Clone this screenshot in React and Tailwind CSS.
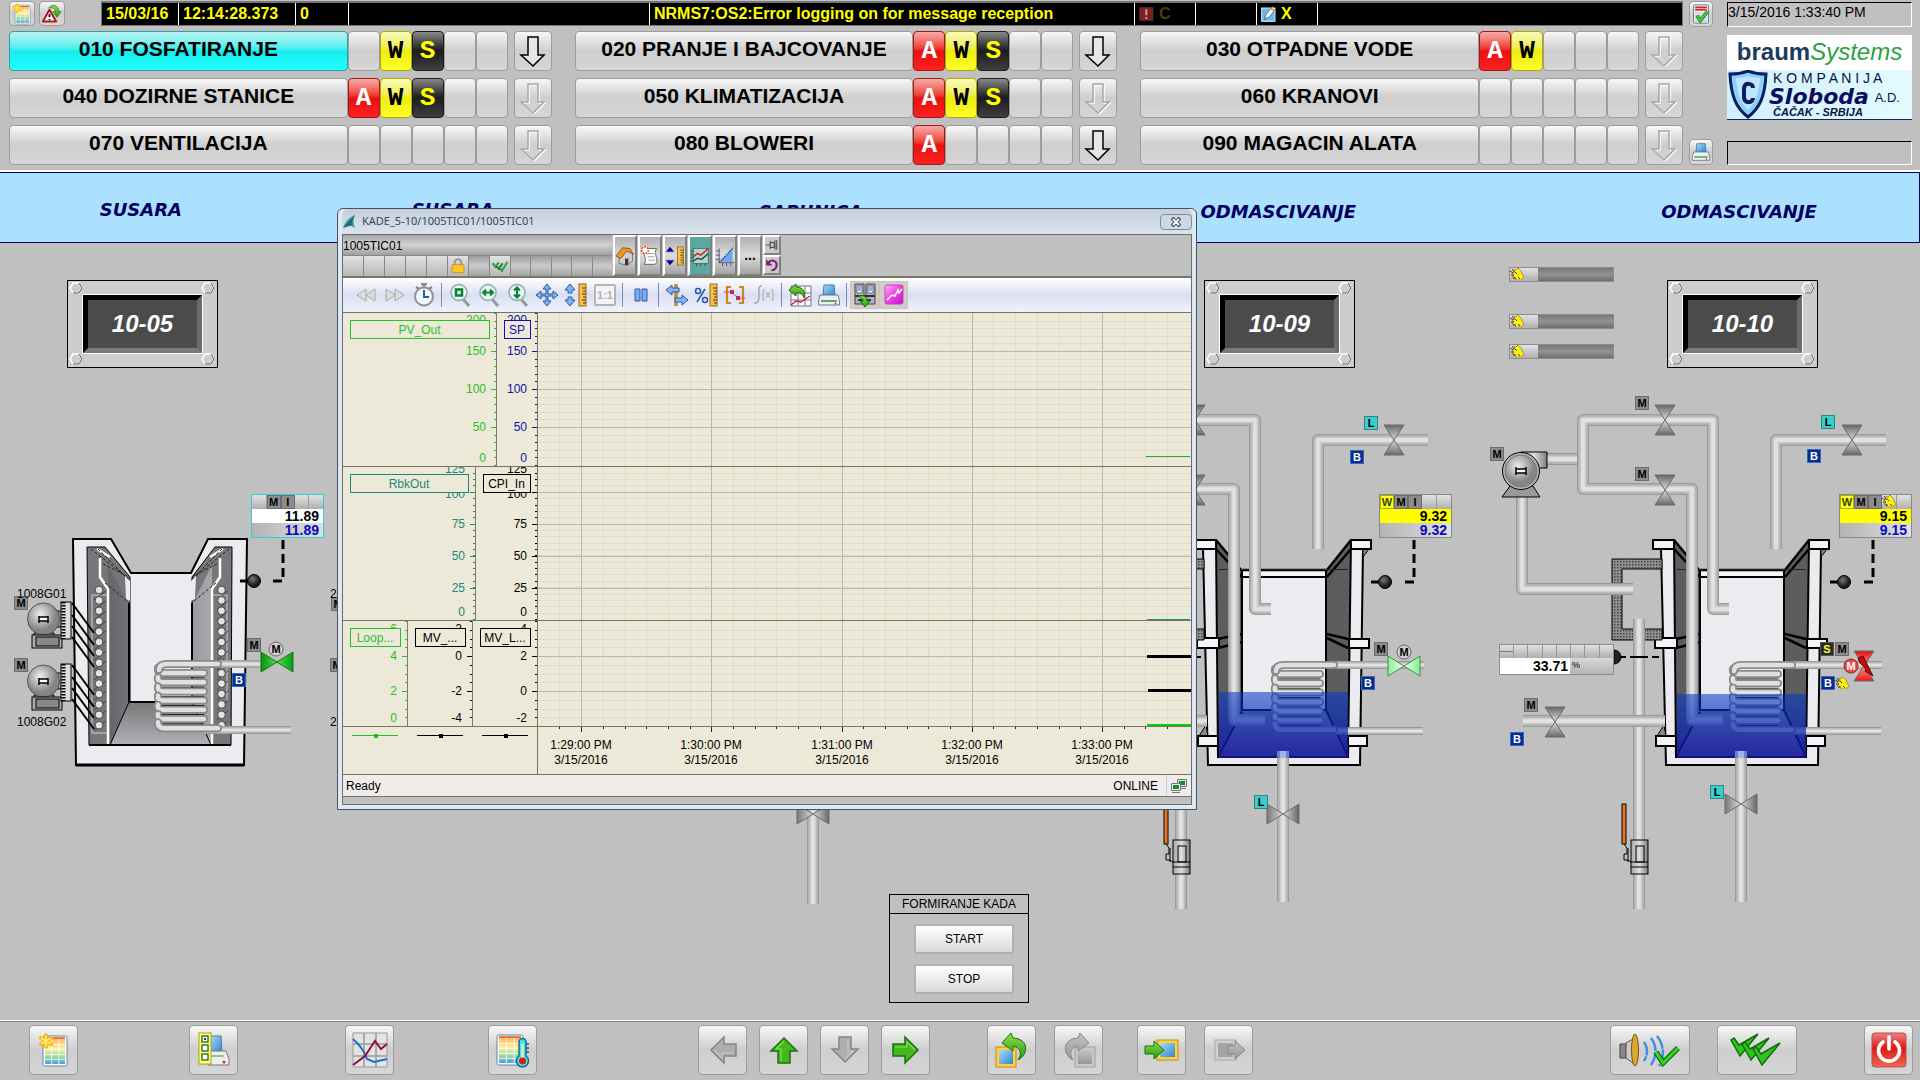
import React from "react";

/* ---------- icons ---------- */

const Star = ({ x = 5, y = 6, r = 5 }) => (
  <g transform={`translate(${x} ${y})`} stroke="#ffb400" strokeWidth={r * 0.62} strokeLinecap="round">
    <path d={`M0 ${-r}V${r}M${-r * 0.87} ${-r / 2}L${r * 0.87} ${r / 2}M${-r * 0.87} ${r / 2}L${r * 0.87} ${-r / 2}`} />
    <path d={`M0 ${-r * 0.8}V${r * 0.8}M${-r * 0.7} ${-r * 0.4}L${r * 0.7} ${r * 0.4}M${-r * 0.7} ${r * 0.4}L${r * 0.7} ${-r * 0.4}`} stroke="#fff07a" strokeWidth={r * 0.28} />
  </g>
);

const Sheet = ({ x, y, w, h }) => (
  <g>
    <rect x={x} y={y} width={w} height={h} rx="1.5" fill="#fff" stroke="#5f86a8" />
    <rect x={x + 2} y={y + 2} width={w - 4} height={h - 4} fill="url(#sheetFill)" />
    <path
      d={`M${x + 2} ${y + h * 0.28}h${w - 4}M${x + 2} ${y + h * 0.45}h${w - 4}M${x + 2} ${y + h * 0.62}h${w - 4}M${x + 2} ${y + h * 0.78}h${w - 4}M${x + w * 0.36} ${y + 2}v${h - 4}M${x + w * 0.66} ${y + 2}v${h - 4}`}
      stroke="#fff"
      strokeWidth=".8"
    />
    <path d={`M${x + 2} ${y + 2}h${w - 4}`} stroke="#e84a1c" strokeWidth="1.4" />
  </g>
);

const Defs = () => (
  <svg className="absolute h-0 w-0" aria-hidden="true">
    <defs>
      <linearGradient id="sheetFill" x1="0" y1="0" x2="0" y2="1">
        <stop offset="0" stopColor="#ffb45a" />
        <stop offset=".4" stopColor="#ffef9a" />
        <stop offset=".7" stopColor="#9fdc9a" />
        <stop offset="1" stopColor="#4f9fe0" />
      </linearGradient>
      <linearGradient id="green" x1="0" y1="0" x2="0" y2="1">
        <stop offset="0" stopColor="#8ee04c" />
        <stop offset="1" stopColor="#1f9a0c" />
      </linearGradient>
      <linearGradient id="greyArrow" x1="0" y1="0" x2="0" y2="1">
        <stop offset="0" stopColor="#c4c4c4" />
        <stop offset="1" stopColor="#969696" />
      </linearGradient>
      <linearGradient id="blue" x1="0" y1="0" x2="1" y2="1">
        <stop offset="0" stopColor="#a8dcf8" />
        <stop offset="1" stopColor="#2f86d0" />
      </linearGradient>
      <linearGradient id="red" x1="0" y1="0" x2="0" y2="1">
        <stop offset="0" stopColor="#f08080" />
        <stop offset=".45" stopColor="#dd1818" />
        <stop offset="1" stopColor="#f06a50" />
      </linearGradient>
      <linearGradient id="pink" x1="0" y1="0" x2="1" y2="1">
        <stop offset="0" stopColor="#ffb0ff" />
        <stop offset=".5" stopColor="#f040e8" />
        <stop offset="1" stopColor="#c010c0" />
      </linearGradient>
    </defs>
  </svg>
);

const Svg = ({ s = "h-6 w-6", vb = "0 0 24 24", children }) => (
  <svg className={`${s} shrink-0`} viewBox={vb} fill="none" aria-hidden="true">
    {children}
  </svg>
);

const ListStarIcon = ({ s }) => (
  <Svg s={s} vb="0 0 32 36">
    <Sheet x={5} y={4} w={24} h={30} />
    <Star x={8} y={9} r={6} />
  </Svg>
);
const AlarmArrowIcon = () => (
  <Svg s="h-5 w-5">
    <path d="M9 7L1 21h16z" fill="#fff" stroke="#b01818" strokeWidth="2.4" strokeLinejoin="round" />
    <path d="M9 12v4M9 18v1.5" stroke="#111" strokeWidth="2.2" />
    <path d="M8 5C12-1 20 1 20 9h3l-5 7-5-7h3c0-4-4-5-8-4z" fill="url(#green)" stroke="#1c7a10" strokeWidth=".8" />
  </Svg>
);
const ReportCheckIcon = () => (
  <Svg s="h-5 w-5">
    <rect x="3" y="1" width="18" height="22" rx="1" fill="#e6edf5" stroke="#51708f" />
    <rect x="5" y="3" width="14" height="5" fill="#e02020" />
    <path d="M5 5.5h14" stroke="#fff" strokeWidth=".8" />
    <path d="M5 11h14M5 14h14M5 17h14M5 20h14" stroke="#a8bdd0" />
    <path d="M7 14l4 6 9-11" stroke="#0f6d0a" strokeWidth="4" />
    <path d="M7 14l4 6 9-11" stroke="#4cd63c" strokeWidth="2.2" />
  </Svg>
);
const PrinterIcon = ({ s = "h-5 w-5" }) => (
  <Svg s={s}>
    <path d="M7 2h10l1 10H6z" fill="url(#blue)" stroke="#3c7ba8" />
    <path d="M3 12h18l1.5 6v4h-21v-4z" fill="#eef1f3" stroke="#6c7a86" />
    <path d="M4 18h16" stroke="#2c9a3c" strokeWidth="1.6" />
    <circle cx="18.5" cy="20.5" r="1" fill="#e33" />
  </Svg>
);
const NoteIcon = () => (
  <Svg s="h-4 w-4">
    <rect x="1" y="3" width="20" height="20" fill="#5fc0f0" stroke="#d8f0ff" strokeWidth="1.5" />
    <path d="M5 20l3-8L17 1l5 3-9 12z" fill="#fff" stroke="#333" />
    <path d="M15 4l5 3" stroke="#e9a23a" strokeWidth="3" />
  </Svg>
);
const AlertSquare = () => (
  <Svg s="h-4 w-4">
    <rect x="1" y="2" width="20" height="20" fill="#7c2222" stroke="#4d3030" />
    <path d="M11 5v9M11 16.5v3" stroke="#c9a0a0" strokeWidth="3" />
  </Svg>
);
const DownArrow = ({ on }) => (
  <Svg s="h-8 w-8" vb="0 0 32 32">
    {!on && <path d="M12 3h10v18h6L17 32 5 21h7z" stroke="#fff" strokeWidth="1.5" />}
    <path d="M11 2h10v18h6L16 31 4 20h7z" fill={on ? "#e6e6e6" : "none"} stroke={on ? "#000" : "#a6a6a6"} strokeWidth="1.5" />
  </Svg>
);
const BlockArrow = ({ dir, on }) => {
  const r = { left: 180, up: -90, down: 90, right: 0 }[dir];
  return (
    <Svg s="h-8 w-8" vb="0 0 32 32">
      <path
        transform={`rotate(${r} 16 16)`}
        d="M3 10h12V3l13 13-13 13v-7H3z"
        fill={on ? "#43b81e" : "#aeaeae"}
        stroke={on ? "#1c7010" : "#858585"}
        strokeWidth="1.5"
      />
      <path transform={`rotate(${r} 16 16)`} d="M5 13h12V8l8 8" stroke={on ? "#93e860" : "#cfcfcf"} strokeWidth="1.2" opacity=".8" />
    </Svg>
  );
};
const ReportPrintIcon = () => (
  <Svg s="h-9 w-9" vb="0 0 36 36">
    <path d="M14 4h11l1 16H14z" fill="url(#blue)" stroke="#5b7d99" />
    <path d="M12 19h18l3 8v6H12z" fill="#eee" stroke="#777" />
    <path d="M13 24h15" stroke="#38a038" />
    <circle cx="28" cy="30" r="1.5" fill="#e22" />
    <rect x="3" y="1" width="12" height="31" fill="#ffff8c" stroke="#a8a800" />
    <path d="M6 4h6v6H6zM6 13h6v6H6zM6 22h6v6H6z" fill="#fff" stroke="#3c7a20" strokeWidth="1.5" />
    <path d="M8 6h2v2H8z" fill="#1c3a80" />
  </Svg>
);
const TrendIcon = () => (
  <Svg s="h-9 w-9" vb="0 0 36 36">
    <path d="M1 1h34v34H1z" fill="#e3e3e3" stroke="#999" />
    <path d="M1 12h34M1 24h34M12 1v34M24 1v34" stroke="#999" strokeWidth="1.5" />
    <path d="M1 7c7 6 12 14 14 20l7 3 13-3" stroke="#1a6fc8" strokeWidth="2" />
    <path d="M1 33l12-9 10-15 6 8 6-5" stroke="#8c1040" strokeWidth="2" />
  </Svg>
);
const TableThermoIcon = () => (
  <Svg s="h-9 w-9" vb="0 0 36 36">
    <Sheet x={2} y={3} w={26} h={30} />
    <path d="M24 10a3.5 3.5 0 017 0v14a6 6 0 11-7 0z" fill="#4fe0f0" stroke="#0c6f90" strokeWidth="1.5" />
    <path d="M27.5 12v16" stroke="#fff5a0" strokeWidth="2" />
    <circle cx="27.5" cy="29" r="3.5" fill="#e01818" />
    <path d="M31 12h3M31 16h3M31 20h3" stroke="#0c5f90" strokeWidth="1.5" />
  </Svg>
);
const PageCurveIcon = ({ on, flip }) => (
  <Svg s="h-9 w-9" vb="0 0 36 36">
    <g transform={flip ? "translate(36 0) scale(-1 1)" : undefined}>
      <rect x="2" y="15" width="20" height="20" fill={on ? "#ffd23c" : "#c8c8c8"} stroke={on ? "#c88a10" : "#a0a0a0"} />
      <rect x="5" y="18" width="14" height="14" fill={on ? "url(#blue)" : "url(#greyArrow)"} />
      <path d="M17 1L8 11l11 8v-5c8 1 9 8 5 14 10-5 12-21-5-22z" fill={on ? "url(#green)" : "url(#greyArrow)"} stroke={on ? "#1c7010" : "#888"} />
    </g>
  </Svg>
);
const GotoIcon = ({ on }) => (
  <Svg s="h-9 w-9" vb="0 0 36 36">
    <rect x={on ? 13 : 4} y="8" width="21" height="20" fill={on ? "#ffd23c" : "#d0d0d0"} stroke={on ? "#c88a10" : "#a8a8a8"} />
    <rect x={on ? 16 : 7} y="11" width="15" height="14" fill={on ? "url(#blue)" : "#a4a4a4"} />
    {on ? (
      <path d="M1 14h9V9l10 9-10 9v-5H1z" fill="url(#green)" stroke="#1c7010" />
    ) : (
      <path d="M17 14h7V9l10 9-10 9v-5h-7z" fill="url(#greyArrow)" stroke="#888" />
    )}
  </Svg>
);
const HornIcon = () => (
  <Svg s="h-9 w-16" vb="0 0 64 36">
    <path d="M2 12h6v14H2z" fill="#888" stroke="#444" />
    <path d="M8 11l7-4v24l-7-5z" fill="#ccc" stroke="#555" />
    <ellipse cx="17" cy="18" rx="3.5" ry="16" fill="#d8a830" stroke="#7a5210" />
    <path d="M26 10c4 6 4 12 0 19M33 6c6 8 6 18 0 27M39 4c7 9 8 20 2 30" stroke="#3f8fe0" strokeWidth="2.5" strokeDasharray="14 1" />
    <path d="M38 20l7 11 15-15" stroke="#0f6d0a" strokeWidth="5.5" />
    <path d="M38 20l7 11 15-15" stroke="#35d428" strokeWidth="3" />
  </Svg>
);
const TripleCheckIcon = () => (
  <Svg s="h-9 w-14" vb="0 0 56 36">
    {[
      [0, 0],
      [11, 4],
      [22, 9],
    ].map(([x, y]) => (
      <path key={x} transform={`translate(${x} ${y})`} d="M2 8l3-2 5 7L29 2 11 24z" fill="#2fc41e" stroke="#0f6d0a" strokeWidth="1.5" />
    ))}
  </Svg>
);
const PowerIcon = () => (
  <Svg s="h-9 w-9" vb="0 0 36 36">
    <rect x="1" y="1" width="34" height="34" rx="3" fill="url(#red)" stroke="#b85050" />
    <path d="M12 10a10.5 10.5 0 1012 0" stroke="#fff" strokeWidth="3.6" strokeLinecap="round" />
    <path d="M18 5v12" stroke="#fff" strokeWidth="3.6" strokeLinecap="round" />
  </Svg>
);
const HandGlyph = () => (
  <Svg s="h-3 w-3.5" vb="0 0 14 12">
    <path d="M4 1l2 1 2-2 3 3 1 3 2 3-3 3H6L4 9H2l2-2-2-2 3-1z" fill="#ffee10" stroke="#6a6a20" strokeWidth=".6" />
    <path d="M2 1l2 3M0 3l3 2M1 7h3M3 10h3M5 4l2 2M8 9l2 2" stroke="#3c3c30" />
  </Svg>
);

/* ---------- header ---------- */

const raised = "border border-[#9c9c9c] rounded-sm bg-gradient-to-b from-[#f7f7f7] via-[#cecece] to-[#d6d6d6]";

const AREAS = [
  ["010 FOSFATIRANJE", " WS  ", true],
  ["020 PRANJE I BAJCOVANJE", "AWS  ", true],
  ["030 OTPADNE VODE", "AW   ", false],
  ["040 DOZIRNE STANICE", "AWS  ", false],
  ["050 KLIMATIZACIJA", "AWS  ", false],
  ["060 KRANOVI", "     ", false],
  ["070 VENTILACIJA", "     ", false],
  ["080 BLOWERI", "A    ", true],
  ["090 MAGACIN ALATA", "     ", false],
];

const CELL = {
  A: "border-[#a01818] bg-gradient-to-b from-[#f6a8a8] via-[#e81010] to-[#ff2020] text-white",
  W: "border-[#b0a800] bg-gradient-to-b from-[#fbfbb8] via-[#ecec10] to-[#ffff28] text-black",
  S: "border-[#1c1c1c] bg-gradient-to-b from-[#8a8a8a] via-[#1c1c1c] to-[#404040] text-[#ffff00]",
};

function Area({ name, cells, arrow, active }) {
  return (
    <div className="flex h-10">
      <button
        className={`min-w-0 flex-1 rounded-sm border pb-1 text-[21px] font-bold whitespace-nowrap text-black ${
          active
            ? "border-[#2fa0a4] bg-gradient-to-b from-[#b8f4f4] via-[#14ecec] to-[#20ffff]"
            : "border-[#9c9c9c] bg-gradient-to-b from-[#f7f7f7] via-[#cecece] to-[#d6d6d6]"
        }`}
      >
        {name}
      </button>
      {cells.split("").map((c, i) =>
        c === " " ? (
          <span key={i} className={`w-8 ${raised}`} />
        ) : (
          <button key={i} className={`w-8 rounded-sm border text-center font-['Liberation_Mono',monospace] text-[26px] leading-9 font-bold ${CELL[c]}`}>
            {c}
          </button>
        )
      )}
      <button aria-label={`${name} next alarm`} className={`ml-1.5 flex w-[38px] items-center justify-center ${raised}`}>
        <DownArrow on={arrow} />
      </button>
    </div>
  );
}

const smallBtn = `flex items-center justify-center ${raised}`;

function Header() {
  return (
    <header className="flex border-b-2 border-white pt-px pr-2 pb-[5px] pl-[9px]">
      <div className="min-w-0 flex-1">
        <div className="flex h-[25px]">
          <button aria-label="Alarm list" className={`w-[26px] ${smallBtn}`}><ListStarIcon s="h-6 w-5" /></button>
          <button aria-label="Next alarm" className={`ml-1 w-[26px] ${smallBtn}`}><AlarmArrowIcon /></button>
          <div className="ml-9 flex min-w-0 flex-1 divide-x divide-white border border-t-2 border-[#777] bg-black text-[16px] leading-[22px] font-bold whitespace-nowrap text-[#ffff00]">
            <span className="w-[77px] pl-1">15/03/16</span>
            <span className="w-[117px] pl-1">12:14:28.373</span>
            <span className="w-[53px] pl-1">0</span>
            <span className="w-[301px]" />
            <span className="w-[485px] pl-1">NRMS7:OS2:Error logging on for message reception</span>
            <span className="flex w-[61px] items-center gap-1 pl-1 text-[#404008]"><AlertSquare />C</span>
            <span className="w-[61px]" />
            <span className="flex w-[61px] items-center gap-1 pl-1"><NoteIcon />X</span>
            <span className="flex-1" />
          </div>
        </div>
        <div className="mt-[5px] grid grid-cols-3 gap-x-[23px] gap-y-[7px]">
          {AREAS.map(([name, cells, arrow], i) => (
            <Area key={name} name={name} cells={cells} arrow={arrow} active={i === 0} />
          ))}
        </div>
      </div>
      <div className="ml-1.5 flex flex-col justify-between">
        <button aria-label="Acknowledge report" className={`h-[26px] w-6 ${smallBtn}`}><ReportCheckIcon /></button>
        <button aria-label="Print" className={`h-[26px] w-6 ${smallBtn}`}><PrinterIcon /></button>
      </div>
      <div className="ml-[14px] flex w-[185px] flex-col">
        <time className="mt-px h-[25px] border border-t-black border-r-white border-b-white border-l-black text-[14px] leading-[18px]">3/15/2016 1:33:40 PM</time>
        <div className="mt-2 h-[35px] bg-white text-center text-[24px] leading-[34px] whitespace-nowrap">
          <span className="font-bold text-[#1b3a5c]">braum</span>
          <span className="text-[#2f9e44] italic">Systems</span>
        </div>
        <div className="flex h-[50px] border-b border-[#0a2a5a] bg-gradient-to-r from-[#d0efff] to-[#e4fbff] text-[#0a1240]">
          <svg className="h-[50px] w-[42px] shrink-0" viewBox="0 0 42 50" fill="none" aria-hidden="true">
            <path d="M3 4c7 0 13-1 18-3 5 2 11 3 18 3-1 22-6 34-18 43C9 38 4 26 3 4z" fill="#8fd0f8" stroke="#0d1e60" strokeWidth="3" />
            <path d="M9 8c5 0 9-1 12-2 3 1 7 2 12 2-1 14-4 24-12 32C13 32 10 22 9 8z" fill="#bfe6ff" />
            <path d="M26 18c0-5-8-6-9 0v10c1 6 9 5 9 0" stroke="#0d1e60" strokeWidth="4" />
          </svg>
          <div className="min-w-0 flex-1 whitespace-nowrap">
            <div className="pl-1 text-[14px] leading-[17px]">K O M P A N I J A</div>
            <div className="flex items-end justify-between pr-3">
              <span className="font-['DejaVu_Sans',sans-serif] text-[22px] leading-[19px] font-bold text-[#0d0d60] italic">Sloboda</span>
              <span className="text-[13px] leading-4">A.D.</span>
            </div>
            <div className="pl-1 text-[11px] leading-[13px] font-bold italic">ČAČAK - SRBIJA</div>
          </div>
        </div>
        <div className="mt-auto h-6 border border-t-black border-r-white border-b-white border-l-black" />
      </div>
    </header>
  );
}

/* ---------- plant drawing primitives ---------- */

const Pipe = ({ d, w = 12 }) => (
  <g fill="none" strokeLinejoin="round">
    <path d={d} stroke="#9a9a9a" strokeWidth={w} />
    <path d={d} stroke="#b2b2b2" strokeWidth={w - 2} />
    <path d={d} stroke="#cccccc" strokeWidth={w * 0.55} />
    <path d={d} stroke="#e2e2e2" strokeWidth={w * 0.28} />
  </g>
);

const ValveV = ({ x, y, fill = "url(#valveV)" }) => (
  <path d={`M${x - 10} ${y - 15}h20L${x - 10} ${y + 15}h20z`} fill={fill} stroke="#6a6a6a" strokeWidth="1" />
);
const ValveH = ({ x, y, fill = "url(#valveH)", stroke = "#6a6a6a" }) => (
  <path d={`M${x - 16} ${y - 10}v20L${x + 16} ${y - 10}v20z`} fill={fill} stroke={stroke} strokeWidth="1" />
);
const MotorDisc = ({ x, y, red }) => (
  <g>
    <circle cx={x} cy={y} r="7" fill={red ? "#e84848" : "#d0d0d0"} stroke={red ? "#a02020" : "#666"} />
    <text x={x} y={y + 4} textAnchor="middle" fontSize="11" fontWeight="bold" fill={red ? "#fff" : "#000"}>M</text>
  </g>
);
const Coil = ({ x1, x2, y, n, gap }) => {
  const turns = Array.from({ length: n }, (_, i) => y + 9 + i * gap);
  const last = y + 9 + n * gap;
  return (
    <g fill="none" strokeLinecap="round">
      {turns.map((t) => (
        <g key={t}>
          <path d={`M${x1 + 6} ${t}H${x2 - 4}`} stroke="#000" strokeWidth="1" transform="translate(0 5)" />
          <path d={`M${x1 + 3} ${t - 5}q-1 5 5 5H${x2 - 4}`} stroke="#8a8a8a" strokeWidth="8" />
          <path d={`M${x1 + 3} ${t - 5}q-1 5 5 5H${x2 - 4}`} stroke="#e0e0e0" strokeWidth="4.5" />
        </g>
      ))}
      <path d={`M${x1 + 3} ${last - 6}q0 6 6 6H${x2 + 10}`} stroke="#8a8a8a" strokeWidth="8" />
      <path d={`M${x1 + 3} ${last - 6}q0 6 6 6H${x2 + 10}`} stroke="#e0e0e0" strokeWidth="4.5" />
      <path d={`M${x2 + 10} ${y}H${x1 + 12}q-8 0-8 6`} stroke="#8a8a8a" strokeWidth="8" />
      <path d={`M${x2 + 10} ${y}H${x1 + 12}q-8 0-8 6`} stroke="#e0e0e0" strokeWidth="4.5" />
    </g>
  );
};
const Probe = ({ x, y, dx, top }) => (
  <g stroke="#000">
    <path d={`M${x - 14} ${y}h10`} strokeWidth="3" />
    <circle cx={x} cy={y} r="6.5" fill="url(#ball)" />
    <path d={`M${x + dx} ${top}V${y}h-12`} fill="none" strokeWidth="3" strokeDasharray="9 5" />
  </g>
);
const BallValve = ({ x }) => (
  <g stroke="#000">
    <rect x={x - 17} y="804" width="4" height="40" fill="#e8742c" />
    <path d={`M${x - 15} 844l3 4v6h-3v6h4l5 4M${x - 11} 848v14`} fill="none" />
    <rect x={x - 8} y="840" width="17" height="34" fill="url(#metal)" />
    <rect x={x - 3} y="846" width="8" height="16" fill="none" />
    <path d={`M${x - 8} 862h17M${x - 8} 867h17`} />
  </g>
);

/* Degreasing bath with its inlet, drain, overflow and heating coil. */
function Bath({ dx, waterY, feedValveX, drainY, children }) {
  return (
    <g transform={`translate(${dx} 0)`}>
      <path d="M1655 559h8v7h-8z" fill="#777" />
      <path d="M1661 548L1666 765H1818L1821 548z" fill="#ebebf0" stroke="#000" strokeWidth="2" />
      <path d="M1664 725l-7 11h9zM1821 549h6l-6 8z" fill="#888" stroke="#000" />
      <path d="M1674 540L1699 570H1785L1809 540 1806 757H1676z" fill="#5d5d60" />
      <path d="M1674 539L1699 569H1785L1809 539z" fill="#c0c0c0" />
      <path d="M1699 571h86v6h-86z" fill="#f4f4f8" />
      <rect x="1700" y="577" width="84" height="133" fill="#ebebf0" stroke="#000" strokeWidth="2" />
      <path d="M1700 711h84l22 46H1676z" fill="#8c8c90" />
      <path d="M1674 540L1699 570H1785L1809 540M1674 549L1700 577M1785 577L1809 549M1676 639l24-5M1676 648l24-6M1785 634l21 5M1785 638l21 10" fill="none" stroke="#000" strokeWidth="2.5" />
      <path d="M1674 540L1676 757H1806L1809 540M1676 757L1700 712M1784 710L1806 757M1700 570v140M1784 570v140" fill="none" stroke="#000" strokeWidth="2" />
      <path d="M1677 569.5H1806" stroke="#222" />
      <g fill="#f4f4f8" stroke="#000" strokeWidth="2">
        <path d="M1653 540h21v9h-21zM1809 540h20v9h-20zM1655 638h22v10h-22zM1807 639h20v9h-20zM1656 736h20v10h-20zM1806 736h19v10h-19z" />
      </g>
      <path d="M1612 559h50v10h-40v60h40v11h-50z" fill="url(#hatch)" stroke="#000" />
      <path d="M1619 657H1662" stroke="#000" strokeWidth="2" strokeDasharray="7 4" />
      <Pipe d="M1639 619V909" />
      <Pipe d="M1523 721H1665" />
      <Pipe d="M1522 497V589H1633" />
      <Pipe d="M1546 459H1583" />
      <Pipe d="M1583 459V489H1692V720H1723" />
      <Pipe d="M1583 459V420H1713V609H1729" />
      <Pipe d="M1886 440H1776V549" />
      <Pipe d="M1792 665H1882" w={8} />
      <Pipe d="M1792 731H1881" w={8} />
      <Coil x1={1730} x2={1782} y={665} n={6} gap={9.3} />
      <rect x="1677" y={waterY} width="129" height={758 - waterY} fill="url(#water)" />
      <Pipe d="M1741 757V902" />
      <path d="M1735 751h12v7h-12z" fill="#6f7fd0" />
      <path d="M1738 751h6v7h-6z" fill="#a9b4e6" />
      <ValveV x={feedValveX} y={420} />
      <ValveV x={feedValveX} y={490} />
      <ValveV x={1852} y={440} />
      <ValveH x={1741} y={drainY} />
      <BallValve x={1639} />
      {children}
    </g>
  );
}

const Fan = ({ y }) => (
  <g stroke="#000">
    <path d={`M50 ${y - 8}h12v16H50M34 ${y + 14}h20v5H34z`} fill="#999" />
    <circle cx="43.5" cy={y} r="16" fill="url(#disc)" stroke="#555" />
    <path d={`M39 ${y - 3}v7M48 ${y - 3}v7M39 ${y - 2}h9v4h-9`} fill="#fff" strokeWidth="1.5" />
    <rect x="32" y={y + 16} width="30" height="13" fill="#aaa" />
    <rect x="36" y={y + 18} width="23" height="9" fill="#888" />
    <rect x="61" y={y - 17} width="10" height="37" fill="#ddd" />
    <path d={`M63.5 ${y - 17}v37`} strokeWidth="4" strokeDasharray="1.5 1.5" />
    {[0, 12, 23, 34].map((k) => (
      <path key={k} d={`M72 ${y - 16 + k}l22 30`} strokeWidth="2" />
    ))}
  </g>
);

const Oven = () => (
  <g>
    <path d="M73 539H111L131 573H191L208 539H247L244 765H76z" fill="#ebebf0" stroke="#000" strokeWidth="2" />
    <path d="M87 547h18l25 30v125L110 745H89zM232 547h-17l-23 30v125l19 43h20z" fill="#77777a" stroke="#000" />
    <path d="M108 565l21 38v99l-19 43zM212 565l-19 38v99l18 43z" fill="url(#side)" />
    <path d="M129 702h63l19 43H110z" fill="url(#floor)" stroke="#000" />
    <path d="M129 603V702M192 603V702M129 702H192M89 745H231" stroke="#000" strokeWidth="2" fill="none" />
    <path d="M76 765H244" stroke="#000" strokeWidth="3" />
    <path d="M100 558v19l8 12V744M220 558v19l-8 12V744M97 549l13 8M223 549l-13 8" stroke="#fff" strokeWidth="2.5" fill="none" />
    <path d="M91 549l38 30M98 549l32 32M103 564l24 12M229 549l-37 30M222 549l-32 32M217 564l-24 12M105 583l22 18M216 583l-22 18" stroke="#222" strokeDasharray="3 2" fill="none" />
    <path d="M125 576l5 5v20l-4-2zM196 576l-5 5v20l4-2z" fill="#ebebf0" />
    <path d="M107 595H92V733h15M213 595h14V700" stroke="#ccc" fill="none" />
    {Array.from({ length: 14 }, (_, i) => (
      <g key={i} fill="#e4e4e8" stroke="#333" strokeWidth=".8">
        <path d={`M94 ${600 + i * 10}l12-9M217 ${600 + i * 10}l11-9`} />
        <circle cx="99" cy={590 + i * 10.4} r="3.8" />
        <circle cx="221.5" cy={590 + i * 10.4} r="3.8" />
      </g>
    ))}
    <Fan y={619} />
    <Fan y={681} />
    <Pipe d="M204 664H262" w={8} />
    <Pipe d="M204 730H291" w={8} />
    <Coil x1={155} x2={208} y={664} n={6} gap={9.2} />
    <ValveH x={277} y={662} fill="url(#valveGreen)" stroke="#0c7a0c" />
    <MotorDisc x={276} y={649} />
    <Probe x={254} y={581} dx={29} top={540} />
  </g>
);

const PlantDrawing = () => (
  <svg className="absolute top-0 left-0 h-[777px] w-[1920px] font-['Liberation_Sans',sans-serif]" viewBox="0 243 1920 777" aria-hidden="true">
    <defs>
      <linearGradient id="valveV" x1="0" y1="0" x2="0" y2="1">
        <stop offset="0" stopColor="#686868" /><stop offset=".5" stopColor="#dcdcdc" /><stop offset="1" stopColor="#686868" />
      </linearGradient>
      <linearGradient id="valveH" x1="0" y1="0" x2="1" y2="0">
        <stop offset="0" stopColor="#787878" /><stop offset=".5" stopColor="#dcdcdc" /><stop offset="1" stopColor="#686868" />
      </linearGradient>
      <linearGradient id="valveGreen" x1="0" y1="0" x2="1" y2="0">
        <stop offset="0" stopColor="#0c8c14" /><stop offset=".5" stopColor="#4fe04f" /><stop offset="1" stopColor="#0a9a18" />
      </linearGradient>
      <linearGradient id="valveLight" x1="0" y1="0" x2="1" y2="0">
        <stop offset="0" stopColor="#90f09c" /><stop offset=".5" stopColor="#e8ffe8" /><stop offset="1" stopColor="#80ee90" />
      </linearGradient>
      <linearGradient id="valveRed" x1="0" y1="0" x2="0" y2="1">
        <stop offset="0" stopColor="#e81010" /><stop offset=".5" stopColor="#ff9090" /><stop offset="1" stopColor="#f01818" />
      </linearGradient>
      <linearGradient id="metal"><stop offset="0" stopColor="#a8a8a8" /><stop offset=".5" stopColor="#dedede" /><stop offset="1" stopColor="#7c7c7c" /></linearGradient>
      <linearGradient id="side"><stop offset="0" stopColor="#66666a" /><stop offset="1" stopColor="#a8a8ac" /></linearGradient>
      <linearGradient id="floor" x1="0" y1="0" x2="0" y2="1"><stop offset="0" stopColor="#77777a" /><stop offset="1" stopColor="#b2b2b6" /></linearGradient>
      <linearGradient id="water" x1="0" y1="0" x2="0" y2="1">
        <stop offset="0" stopColor="#0038c8" stopOpacity=".55" /><stop offset="1" stopColor="#1414a0" stopOpacity=".85" />
      </linearGradient>
      <radialGradient id="disc" cx=".4" cy=".35"><stop offset="0" stopColor="#eee" /><stop offset="1" stopColor="#848484" /></radialGradient>
      <radialGradient id="ball" cx=".4" cy=".35"><stop offset="0" stopColor="#777" /><stop offset="1" stopColor="#1c1c1c" /></radialGradient>
      <pattern id="hatch" width="3" height="3" patternUnits="userSpaceOnUse"><rect width="3" height="3" fill="#909090" /><rect width="1.5" height="1.5" fill="#444" /></pattern>
    </defs>

    <Oven />

    <Pipe d="M813 760V904" />
    <ValveH x={813} y={814} />

    <Bath dx={-458} waterY={692} feedValveX={1653} drainY={814}>
      <ValveH x={1862} y={666} fill="url(#valveLight)" stroke="#4a8a54" />
      <MotorDisc x={1862} y={652} />
      <Probe x={1843} y={582} dx={29} top={540} />
    </Bath>

    <Bath dx={0} waterY={694} feedValveX={1665} drainY={804}>
      <path d="M1510 486h23l7 11h-38z" fill="#999" stroke="#000" />
      <path d="M1521 452h26v16h-16z" fill="url(#metal)" stroke="#000" />
      <circle cx="1521" cy="471" r="18.5" fill="#b4b4b4" stroke="#000" />
      <circle cx="1521" cy="471" r="16" fill="url(#disc)" stroke="#777" />
      <path d="M1516 467v8M1526 467v8M1516 469h10v4h-10" fill="#fff" stroke="#000" strokeWidth="1.5" />
      <ValveV x={1555} y={722} />
      <path d="M1614 650a7 7 0 010 14z" fill="#222" stroke="#000" />
      <path d="M1633 657h12" stroke="#000" strokeWidth="2" />
      <ValveV x={1864} y={666} fill="url(#valveRed)" />
      <path d="M1858 658l5-2 3 6 2 4 1 2 4 8-8-5 1-2-6-6z" fill="#d00808" stroke="#200" strokeWidth=".8" />
      <MotorDisc x={1851} y={666} red />
      <Probe x={1844} y={582} dx={29} top={540} />
    </Bath>
  </svg>
);

/* ---------- plant nodes placed on the canvas ---------- */

const CANVAS_TOP = 243;
const At = ({ x, y, children }) => (
  <div className="absolute" style={{ left: x, top: y - CANVAS_TOP }}>
    {children}
  </div>
);

const TAG = {
  M: "border-[#6c6c6c] bg-[#8c8c8c] text-black",
  L: "border-[#3a8080] bg-[#38d0cc] text-black",
  B: "border-[#3468b8] bg-[#082c90] text-white",
  S: "border-[#555] bg-[#2a2a2a] text-[#ffff30]",
  W: "border-[#b0b000] bg-[#ffff20] text-[#404000]",
  I: "border-[#6c6c6c] bg-[#8c8c8c] text-black",
};
const Tag = ({ k }) => <span className={`block h-3.5 w-3.5 border text-center text-[11px] leading-3 font-bold ${TAG[k]}`}>{k}</span>;

const TAGS = [
  ["M", 14, 596], ["M", 14, 658], ["M", 247, 638], ["B", 232, 673], ["M", 331, 597], ["M", 330, 658],
  ["L", 1364, 416], ["B", 1350, 450], ["M", 1374, 642], ["B", 1361, 676], ["L", 1254, 795],
  ["M", 1635, 396], ["M", 1635, 467], ["M", 1490, 447], ["L", 1821, 415], ["B", 1807, 449],
  ["M", 1524, 698], ["B", 1510, 732], ["L", 1710, 785], ["S", 1820, 642], ["M", 1835, 642], ["B", 1821, 676],
];

const Plate = ({ children }) => (
  <div className="relative h-[88px] w-[151px] border border-black bg-[#cdcdcd] px-[15px] pt-3.5 pb-[14px]">
    <div className="flex h-full items-center justify-center border-[5px] border-t-black border-r-[#6a6a6a] border-b-[#7a7a7a] border-l-black bg-[#4b4b4b] text-[24px] font-bold text-white italic outline-1 outline-white">
      {children}
    </div>
    <svg className="absolute inset-0 h-full w-full" viewBox="0 0 149 86" fill="#cdcdcd" aria-hidden="true">
      {[[8, 7], [140, 7], [8, 78], [140, 78]].map(([x, y]) => (
        <g key={`${x}-${y}`} transform={`translate(${x} ${y})`}>
          <path d="M-3-5h6l3 5-3 5h-6l-3-5z" stroke="#fff" strokeWidth="1.5" />
          <path d="M3-5l3 5-3 5h-6" fill="none" stroke="#555" />
        </g>
      ))}
    </svg>
  </div>
);

const cellGrey = "bg-gradient-to-b from-[#e2e2e2] to-[#b0b0b0]";

const Reading = ({ value, cells, frame, fill }) => (
  <div className={`w-[73px] border text-right text-[14px] leading-[14px] font-bold ${frame}`}>
    <div className="flex h-3.5 divide-x divide-[#999]">
      {cells.map((c, i) =>
        TAG[c] ? (
          <Tag key={i} k={c} />
        ) : (
          <span key={i} className={`flex-1 ${cellGrey}`}>{c === "hand" && <HandGlyph />}</span>
        )
      )}
    </div>
    <div className={`pr-1 text-black ${fill}`}>{value}</div>
    <div className="bg-gradient-to-r from-[#b4b4b4] to-[#e0e0e0] pr-1 text-[#0808c0]">{value}</div>
  </div>
);

const StatusBar = () => (
  <div className="flex h-[15px] w-[105px] border border-[#8c8c8c]">
    <span className={`w-3.5 ${cellGrey}`}><HandGlyph /></span>
    <span className={`w-3.5 ${cellGrey}`} />
    <span className="flex-1 bg-gradient-to-b from-[#777] via-[#939393] to-[#6e6e6e]" />
  </div>
);

function Plant() {
  return (
    <main className="relative min-h-[777px] flex-1 overflow-hidden">
      <PlantDrawing />
      <At x={67} y={280}><Plate>10-05</Plate></At>
      <At x={1204} y={280}><Plate>10-09</Plate></At>
      <At x={1667} y={280}><Plate>10-10</Plate></At>
      {[267, 314, 344].map((y) => (
        <At key={y} x={1509} y={y}><StatusBar /></At>
      ))}
      {TAGS.map(([k, x, y]) => (
        <At key={`${x}-${y}`} x={x} y={y}><Tag k={k} /></At>
      ))}
      {[["1008G01", 17, 587], ["1008G02", 17, 715], ["2008G01", 330, 587], ["2008G02", 330, 715]].map(([t, x, y]) => (
        <At key={t} x={x} y={y}><div className="text-[12px] leading-[14px]">{t}</div></At>
      ))}
      <At x={251} y={494}><Reading value="11.89" cells={["", "M", "I", "", ""]} frame="border-[#30d0d0]" fill="bg-white" /></At>
      <At x={1379} y={494}><Reading value="9.32" cells={["W", "M", "I", "", ""]} frame="border-[#888]" fill="bg-[#ffff00]" /></At>
      <At x={1839} y={494}><Reading value="9.15" cells={["W", "M", "I", "hand", ""]} frame="border-[#888]" fill="bg-[#ffff00]" /></At>
      <At x={1835} y={677}><HandGlyph /></At>
      <At x={1499} y={644}>
        <div className="w-[115px] border border-[#8c8c8c]">
          <div className="flex h-[13px] divide-x divide-[#999]">
            <span className={`flex w-3.5 flex-col justify-center ${cellGrey}`}><i className="h-px bg-[#777]" /></span>
            {Array.from({ length: 7 }, (_, i) => <span key={i} className={`flex-1 ${cellGrey}`} />)}
          </div>
          <div className="flex h-4 items-center bg-gradient-to-b from-[#d8d8d8] to-[#b4b4b4]">
            <span className="w-[70px] bg-white pr-0.5 text-right text-[14px] leading-4 font-bold">33.71</span>
            <span className="pl-0.5 text-[9px]">%</span>
          </div>
        </div>
      </At>
      <At x={889} y={894}>
        <section className="w-[140px] border border-black text-center text-[12px]">
          <h2 className="border-b border-black leading-[18px]">FORMIRANJE KADA</h2>
          <div className="flex flex-col gap-2.5 pt-2.5 pr-3.5 pb-2 pl-6">
            <button className="h-[30px] rounded-xs border-2 border-[#b0b0b0] bg-gradient-to-b from-white to-[#dadada]">START</button>
            <button className="h-[30px] rounded-xs border-2 border-[#b0b0b0] bg-gradient-to-b from-white to-[#dadada]">STOP</button>
          </div>
        </section>
      </At>
    </main>
  );
}

/* ---------- trend window ---------- */

const Ruler = ({ x }) => (
  <g>
    <rect x={x} y="1" width="7" height="22" fill="#f4c050" stroke="#9a6a10" />
    <path d={`M${x + 3} 5h4M${x + 4} 8h3M${x + 3} 11h4M${x + 4} 14h3M${x + 3} 17h4M${x + 4} 20h3`} stroke="#5a3a00" />
  </g>
);
const Lens = ({ children }) => (
  <Svg>
    <path d="M15 16l6 7" stroke="#999" strokeWidth="3" />
    <circle cx="11" cy="9.5" r="8" fill="#e8f8f4" stroke="#9cb8b4" strokeWidth="1.8" />
    {children}
  </Svg>
);

const TOOLS = [
  ["First", <Svg><path d="M12 6v12L3 12zM21 6v12l-9-6z" fill="#ddd" stroke="#aaa" /></Svg>],
  ["Last", <Svg><path d="M3 6v12l9-6zM12 6v12l9-6z" fill="#ddd" stroke="#aaa" /></Svg>],
  ["Time range", <Svg><path d="M9 1h6M12 1v4M4 4l3 2M20 4l-3 2" stroke="#888" strokeWidth="2.5" /><circle cx="12" cy="13.5" r="9" fill="#f2f6ff" stroke="#909090" strokeWidth="2" /><path d="M12 7v7h5" stroke="#3058a0" strokeWidth="2" /></Svg>],
  null,
  ["Zoom area", <Lens><path d="M8 6.5h6v6H8z" stroke="#0a8030" strokeWidth="2.5" /></Lens>],
  ["Zoom time", <Lens><path d="M6 9.5h10M9 6.5l-3 3 3 3M13 6.5l3 3-3 3" stroke="#0a8030" strokeWidth="2" /></Lens>],
  ["Zoom value", <Lens><path d="M11 4.5v10M8 7.5l3-3 3 3M8 11.5l3 3 3-3" stroke="#0a8030" strokeWidth="2" /></Lens>],
  ["Move", <Svg><path d="M12 1l4 5h-3v5h5V8l5 4-5 4v-3h-5v5h3l-4 5-4-5h3v-5H6v3l-5-4 5-4v3h5V6H8z" fill="#84b4f0" stroke="#2858a8" /></Svg>],
  ["Move value axis", <Svg><path d="M6 1l5 6H8v3H4V7H1zM6 23l5-6H8v-3H4v3H1z" fill="#84b4f0" stroke="#2858a8" /><Ruler x={15} /></Svg>],
  ["Original view", <Svg><rect x="2" y="2" width="20" height="20" rx="1" fill="#f4f4f6" stroke="#b4b4b4" strokeWidth="2" /><text x="12" y="16" textAnchor="middle" fontSize="11" fontWeight="bold" fill="#b0b0b0">1:1</text></Svg>],
  null,
  ["Pause", <Svg><path d="M6 6h5v12H6zM13 6h5v12h-5z" fill="#7cacf0" stroke="#3058b0" /></Svg>],
  null,
  ["Time shift", <Svg><path d="M11 1v22" stroke="#c88a20" strokeWidth="3.5" /><path d="M1 7l6-5v3h7v4H7v3zM23 17l-6-5v3h-7v4h7v3z" fill="#84b4f0" stroke="#2858a8" /></Svg>],
  ["Relative axis", <Svg><path d="M3 19L11 6" stroke="#2858a8" strokeWidth="1.5" /><circle cx="4" cy="8" r="2.5" stroke="#2858a8" strokeWidth="1.5" /><circle cx="11" cy="17" r="2.5" stroke="#2858a8" strokeWidth="1.5" /><Ruler x={16} /></Svg>],
  ["Statistics range", <Svg><path d="M8 4H4v16h4M16 4h4v16h-4" stroke="#c88a20" strokeWidth="2.2" /><path d="M1 9h6l9 6h7" stroke="#e04040" strokeDasharray="3 1" /><path d="M7 7h4v4H7zM13 13h4v4h-4z" fill="#c02860" /></Svg>],
  ["Calculate", <Svg><path d="M10 3C6 2 7 8 7 12s0 9-5 8" stroke="#a8a8a8" strokeWidth="1.5" /><path d="M13 7h-2v10h2M19 7h2v10h-2M14 9l4 6M18 9l-4 6" stroke="#a8a8a8" /></Svg>],
  null,
  ["Add trend", <Svg><path d="M3 3h20v20H3zM10 3v20M17 3v20M3 10h20M3 17h20" fill="#fff" stroke="#777" /><path d="M3 22l5-4 5 1 9-6" stroke="#c02050" strokeWidth="1.5" /><path d="M1 7l7-6v3c7 0 9 4 8 11-1-4-4-6-8-5v3z" fill="url(#green)" stroke="#1c7010" /></Svg>],
  ["Print trend", <PrinterIcon s="h-6 w-6" />],
  null,
  ["Switch source", <Svg><path d="M2 1h9v20H2zM13 1h9v20h-9z" fill="#a8b4c4" stroke="#444" /><path d="M4 3h5v7H4zM15 3h5v7h-5z" fill="#fff" stroke="#668" /><path d="M5 5h3M5 7h3M16 5h3M16 7h3" stroke="#26a" /><path d="M2 13h20M5 17h13" stroke="#333" strokeWidth="2" /><path d="M5 13c7-1 9 1 9 5h3l-5 6-5-6h3c0-2-1-3-5-5z" fill="url(#green)" stroke="#1c7010" /></Svg>, true],
  ["Trend archive", <Svg><rect x="3" y="2" width="18" height="19" rx="2" fill="url(#pink)" stroke="#c040c0" /><path d="M5 17l5-5 3 1 3-6 1 3 3-4" stroke="#fff" strokeWidth="1.5" /></Svg>, true],
];

const VIEWS = [
  ["Home", <Svg s="h-6 w-5"><path d="M5 11v10l9 2 7-5v-9l-7-5z" fill="#c8d0dc" stroke="#666" /><path d="M1 12L9 2l9 1 4 7-8-4-7 9z" fill="#f09820" stroke="#8a4a08" /><path d="M12 15h4v8h-4z" fill="#5a3020" /></Svg>],
  ["Messages", <Svg s="h-6 w-5"><path d="M6 3h14c-3 4-1 8 0 12 1 4 0 7-3 7H5c3-4 1-8 0-12z" fill="#fff" stroke="#555" /><path d="M9 9h8M9 13h8M10 17h8" stroke="#888" /><circle cx="6" cy="5" r="4" fill="#fff" stroke="#f04010" strokeWidth="2" strokeDasharray="2 1.5" /></Svg>],
  ["Limits", <Svg s="h-6 w-5"><path d="M6 1l5 6H1zM6 23l5-6H1z" fill="#0808a0" /><Ruler x={15} /></Svg>],
  ["Trend", <Svg s="h-6 w-5"><path d="M4 3h18v18H4z" fill="#a8d8d0" stroke="#566" /><path d="M1 6h3M1 10h3M1 14h3M1 18h3M8 21v3M13 21v3M18 21v3" stroke="#333" /><path d="M4 13l5-4 4 2 9-8" stroke="#e02020" strokeWidth="1.8" /><path d="M4 18l5-3 5 1 8-7" stroke="#333" strokeWidth="1.5" /></Svg>],
  ["Ramp", <Svg s="h-6 w-5"><path d="M6 19L21 4v15z" fill="#6aa8f0" /><path d="M5 20L22 2" stroke="#103a90" strokeDasharray="2 1" strokeWidth="1.5" /><path d="M5 3v17h18M1 6h4M1 11h4M1 16h4M9 20v4M14 20v4M19 20v4" stroke="#446" /></Svg>],
];

const facet = "border-2 border-t-white border-l-white border-r-[#808080] border-b-[#808080]";

const MAJOR_T = [238, 368, 499, 629, 759];
const MINOR_T = Array.from({ length: 30 }, (_, i) => Math.round(238 - 43.3 + i * 21.7)).filter((x) => x > 197 && x < 848);
const PANES = [
  { top: 0, bottom: 153, major: [38, 76, 114], step: 7.6, base: 152 },
  { top: 154, bottom: 307, major: [179, 211, 243, 275], step: 6.36, base: 306 },
  { top: 308, bottom: 413, major: [343, 378], step: 8.75, base: 413 },
];
const AXES = [
  { p: 0, x: 153, right: 143, box: [7, 139], name: "PV_Out", c: "#28c028", labels: [["200", 7], ["150", 38], ["100", 76], ["50", 114], ["0", 145]] },
  { p: 0, x: 194, right: 184, box: [161, 26], name: "SP", c: "#1010b0", labels: [["200", 7], ["150", 38], ["100", 76], ["50", 114], ["0", 145]] },
  { p: 1, x: 132, right: 122, box: [7, 118], name: "RbkOut", c: "#208878", labels: [["125", 156], ["100", 181], ["75", 211], ["50", 243], ["25", 275], ["0", 299]] },
  { p: 1, x: 194, right: 184, box: [140, 47], name: "CPI_In", c: "#000", labels: [["125", 156], ["100", 181], ["75", 211], ["50", 243], ["25", 275], ["0", 299]] },
  { p: 2, x: 64, right: 54, box: [7, 50], name: "Loop...", c: "#28c028", labels: [["6", 316], ["4", 343], ["2", 378], ["0", 405]] },
  { p: 2, x: 129, right: 119, box: [72, 50], name: "MV_...", c: "#000", labels: [["2", 316], ["0", 343], ["-2", 378], ["-4", 405]] },
  { p: 2, x: 194, right: 184, box: [137, 50], name: "MV_L...", c: "#000", labels: [["4", 316], ["2", 343], ["0", 378], ["-2", 405]] },
];

function Trend() {
  return (
    <svg className="block h-[461px] w-full bg-[#ece9d8] font-['Liberation_Sans',sans-serif]" viewBox="0 0 848 461" fontSize="12" shapeRendering="crispEdges">
      <defs>
        {PANES.map((p, i) => (
          <clipPath key={i} id={`pane${i}`}><rect x="0" y={p.top} width="848" height={p.bottom - p.top} /></clipPath>
        ))}
      </defs>
      {PANES.map((p, i) => {
        const rows = [];
        for (let y = p.base - p.step; y > p.top + 3; y -= p.step) rows.push(Math.round(y));
        return (
          <g key={i} fill="none">
            <path d={rows.map((y) => `M195 ${y + 0.5}H848`).join("")} stroke="#dfdccb" />
            <path d={MINOR_T.map((x) => `M${x + 0.5} ${p.top}V${p.bottom}`).join("")} stroke="#dedbc9" />
            <path d={p.major.map((y) => `M195 ${y + 0.5}H848`).join("")} stroke="#bab8a8" />
          </g>
        );
      })}
      <path d={MAJOR_T.map((x) => `M${x + 0.5} 0V413`).join("")} stroke="#bab8a8" />
      {AXES.map((a) => {
        const p = PANES[a.p];
        const ticks = [];
        for (let y = p.base; y >= p.top; y -= p.step) ticks.push(Math.round(y));
        return (
          <g key={a.name} clipPath={`url(#pane${a.p})`}>
            <path d={`M${a.x + 0.5} ${p.top}V${p.bottom}`} stroke="#7f7c68" />
            <path d={ticks.map((y) => `M${a.x - 2} ${y + 0.5}h2`).join("") + p.major.map((y) => `M${a.x - 5} ${y + 0.5}h5`).join("")} stroke={a.c} />
            {a.labels.map(([t, y]) => (
              <text key={y} x={a.right} y={y + 4} textAnchor="end" fill={a.c}>{t}</text>
            ))}
            <rect x={a.box[0] + 0.5} y={p.top + 7.5} width={a.box[1]} height="18" fill="#ece9d8" stroke={a.c} />
            <text x={a.box[0] + a.box[1] / 2} y={p.top + 21} textAnchor="middle" fill={a.c}>{a.name}</text>
          </g>
        );
      })}
      <path d="M0 153.5H848M0 307.5H848M0 413.5H848M194.5 0V461" stroke="#77745f" />
      <path d={MINOR_T.map((x) => `M${x + 0.5} 414v2`).join("") + MAJOR_T.map((x) => `M${x + 0.5} 414v5`).join("")} stroke="#222" />
      {MAJOR_T.map((x, i) => (
        <g key={x} textAnchor="middle">
          <text x={x} y="436">{`1:${29 + i}:00 PM`}</text>
          <text x={x} y="451">3/15/2016</text>
        </g>
      ))}
      {[[9, "#28c028"], [74, "#000"], [139, "#000"]].map(([x, c]) => (
        <path key={x} d={`M${x} 422.5h46M${x + 22} 421v3h3v-3z`} stroke={c} fill={c} />
      ))}
      <path d="M803 143.5h44" stroke="#28b028" />
      <path d="M804 306.5h43" stroke="#208888" />
      <path d="M804 343.5h44M805 377.5h43" stroke="#000" strokeWidth="3" />
      <path d="M804 412h44" stroke="#10c810" strokeWidth="2" />
    </svg>
  );
}

function TrendWindow() {
  return (
    <section aria-label="Trend faceplate" className="absolute top-[208px] left-[337px] z-10 w-[860px] rounded-t-md border border-[#46525c] bg-[#dfe8f3] px-1 pb-1">
      <div className="flex h-[25px] items-center rounded-t-md bg-gradient-to-b from-[#c4cfdb] to-[#d9e4ef] text-[#3c4854]">
        <svg className="h-4 w-4" viewBox="0 0 16 16" aria-hidden="true">
          <path d="M1 14C3 8 7 3 13 1c-2 4-2 8 0 13-4-3-8-3-12 0z" fill="#3a9aa4" />
          <path d="M1 14C5 9 8 6 13 1c-3 5-3 7-3 10" fill="#1c6c7c" />
        </svg>
        <h1 className="ml-1 flex-1 font-['Noto_Sans',sans-serif] text-[11px]">KADE_5-10/1005TIC01/1005TIC01</h1>
        <button aria-label="Close" className="flex h-4 w-8 items-center justify-center rounded-sm border border-[#7c8ea0] bg-[#ccd8e4]">
          <svg className="h-2.5 w-2.5" viewBox="0 0 10 10" aria-hidden="true">
            <path d="M1 1l8 8M9 1l-8 8" stroke="#445060" strokeWidth="4" />
            <path d="M2 2l6 6M8 2l-6 6" stroke="#fff" strokeWidth="2" />
          </svg>
        </button>
      </div>
      <div className="border border-[#6c6c6c] bg-[#c0c0c0] pb-[7px]">
        <div className="flex h-[42px] border-b border-[#777]">
          <div className="w-[269px]">
            <div className="h-5 bg-gradient-to-b from-[#a8a8a8] via-[#d2d2d2] to-[#a0a0a0] text-[12px] leading-[22px]">1005TIC01</div>
            <div className="flex h-[21px] divide-x divide-[#888] border-t border-[#888]">
              {Array.from({ length: 13 }, (_, i) => (
                <span key={i} className={`flex items-center justify-center ${i < 8 ? "w-[21px]" : "flex-1"} ${i < 8 && i !== 6 ? "bg-gradient-to-b from-[#e2e2e2] to-[#b8b8b8]" : "bg-gradient-to-b from-[#9c9c9c] via-[#cccccc] to-[#a0a0a0]"}`}>
                  {i === 5 && (
                    <Svg s="h-4 w-4"><path d="M7 11V7a5 5 0 0110 0v4" stroke="#999" strokeWidth="3" /><rect x="3" y="10" width="18" height="12" rx="1" fill="#ffc820" stroke="#b08010" /></Svg>
                  )}
                  {i === 7 && (
                    <Svg s="h-4 w-4"><path d="M1 8l4 5 5-6M6 11l4 5 6-8M11 14l4 5 8-13" stroke="#1c8a30" strokeWidth="3" /><path d="M2 9l3 4 4-5M12 15l3 4 7-12" stroke="#60d070" /></Svg>
                  )}
                </span>
              ))}
            </div>
          </div>
          <div className="flex gap-px pl-px">
            {VIEWS.map(([name, icon]) => (
              <button key={name} aria-label={name} className={`flex w-6 items-center justify-center ${facet} ${name === "Trend" ? "bg-[#5aa8a0]" : "bg-gradient-to-b from-[#b0b0b0] via-[#dcdcdc] to-[#a4a4a4]"}`}>
                {icon}
              </button>
            ))}
            <button aria-label="More" className={`w-6 bg-gradient-to-b from-[#b0b0b0] via-[#dcdcdc] to-[#a4a4a4] text-[14px] font-bold ${facet}`}>...</button>
            <div className="flex w-[18px] flex-col">
              <button aria-label="Pin" className={`flex h-5 items-center justify-center bg-[#cacaca] ${facet}`}>
                <Svg s="h-3.5 w-3.5"><path d="M1 12h8M9 5v14M9 8h7v8H9M17 4v16M20 4v16" stroke="#555" strokeWidth="2" /></Svg>
              </button>
              <button aria-label="Back" className={`flex h-5 items-center justify-center bg-[#cacaca] ${facet}`}>
                <Svg s="h-3.5 w-3.5"><path d="M6 8c4-6 14-4 14 4 0 6-5 9-9 9" stroke="#7a2080" strokeWidth="3.5" /><path d="M2 2v11h11z" fill="#7a2080" /></Svg>
              </button>
            </div>
          </div>
        </div>
        <div className="flex h-9 items-center border-t border-b border-t-[#77745f] border-b-[#77745f] bg-gradient-to-b from-white via-[#dadff2] to-[#f0f2fc] pl-2">
          {TOOLS.map((t, i) =>
            t === null ? (
              <i key={i} className="mx-[3px] h-6 w-px bg-[#8088b0]" />
            ) : (
              <button key={i} aria-label={t[0]} className={`flex h-7 w-[29px] items-center justify-center ${t[2] ? "border border-[#cbc7bb] bg-[#d2cec6]" : ""}`}>
                {t[1]}
              </button>
            )
          )}
        </div>
        <Trend />
        <div className="flex h-[23px] items-center border-t border-b border-[#77745f] bg-[#f0eceb] pl-[3px] text-[12px]">
          <span className="flex-1">Ready</span>
          <span>ONLINE</span>
          <span className="ml-2 flex h-full items-center border-l border-[#d4d0c8] px-1">
            <svg className="h-4 w-4" viewBox="0 0 16 16" aria-hidden="true">
              <path d="M6.5 1.5h9v7h-9zM10 10.5h5" fill="#ddd" stroke="#777" />
              <path d="M8 3h6v4H8z" fill="#109030" />
              <path d="M.5 5.5h9v7h-9zM1 14.5h8" fill="#eee" stroke="#777" />
              <path d="M2 7h6v4H2z" fill="#109030" />
            </svg>
          </span>
        </div>
      </div>
    </section>
  );
}

/* ---------- footer ---------- */

const FootBtn = ({ label, wide, ml = "", children }) => (
  <button aria-label={label} className={`flex h-[50px] items-center justify-center ${wide ? "w-20" : "w-[49px]"} ${ml} ${raised}`}>
    {children}
  </button>
);

const Footer = () => (
  <footer className="flex border-t border-white pt-1 pr-[7px] pb-[5px] pl-[29px] shadow-[inset_0_1px_0_#808080]">
    <FootBtn label="Alarm list"><ListStarIcon s="h-9 w-9" /></FootBtn>
    <FootBtn label="Report printing" ml="ml-[111px]"><ReportPrintIcon /></FootBtn>
    <FootBtn label="Trends" ml="ml-[107px]"><TrendIcon /></FootBtn>
    <FootBtn label="Measurement table" ml="ml-[94px]"><TableThermoIcon /></FootBtn>
    <FootBtn label="Picture left" ml="ml-[161px]"><BlockArrow dir="left" /></FootBtn>
    <FootBtn label="Picture up" ml="ml-3"><BlockArrow dir="up" on /></FootBtn>
    <FootBtn label="Picture down" ml="ml-3"><BlockArrow dir="down" /></FootBtn>
    <FootBtn label="Picture right" ml="ml-3"><BlockArrow dir="right" on /></FootBtn>
    <FootBtn label="Previous picture" ml="ml-[57px]"><PageCurveIcon on /></FootBtn>
    <FootBtn label="Next picture" ml="ml-[18px]"><PageCurveIcon flip /></FootBtn>
    <FootBtn label="Store picture" ml="ml-[34px]"><GotoIcon on /></FootBtn>
    <FootBtn label="Recall picture" ml="ml-[18px]"><GotoIcon /></FootBtn>
    <FootBtn label="Silence horn" wide ml="ml-auto"><HornIcon /></FootBtn>
    <FootBtn label="Acknowledge all" wide ml="ml-[27px]"><TripleCheckIcon /></FootBtn>
    <FootBtn label="Exit" ml="ml-[67px]"><PowerIcon /></FootBtn>
  </footer>
);

export default function App() {
  return (
    <div className="relative flex min-h-screen flex-col bg-[#c0c0c0] font-['Liberation_Sans',Arial,sans-serif] text-black">
      <Defs />
      <Header />
      <div className="grid h-[71px] grid-cols-[282fr_342fr_374fr_562fr_360fr] border border-l-0 border-[#000060] bg-[#ace0ff] text-center font-['DejaVu_Sans',sans-serif] text-[18px] font-bold text-[#000060] italic">
        <span className="leading-[73px]">SUSARA</span>
        <span className="leading-[73px]">SUSARA</span>
        <span className="leading-[77px]">SAPUNICA</span>
        <span className="leading-[77px]">ODMASCIVANJE</span>
        <span className="leading-[77px]">ODMASCIVANJE</span>
      </div>
      <Plant />
      <TrendWindow />
      <Footer />
    </div>
  );
}
